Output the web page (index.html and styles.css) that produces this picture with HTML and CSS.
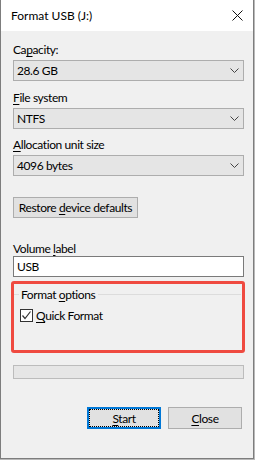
FILE: index.html
```html
<!DOCTYPE html>
<html lang="en">
<head>
  <meta charset="UTF-8" />
  <title>Format USB (J:)</title>
  <link rel="stylesheet" href="styles.css">
</head>
<body>

  <div class="window">
    <div class="titlebar">
      <span class="title">Format USB (J:)</span>
      <svg class="close" width="11" height="11" viewBox="0 0 11 11">
        <path d="M0.5 0.5 L10.5 10.5 M10.5 0.5 L0.5 10.5" stroke="#111" stroke-width="1" fill="none"/>
      </svg>
    </div>

    <div class="content">
      <div class="field">
        <div class="label">Ca<u>p</u>acity:</div>
        <div class="combo">
          <span>28.6 GB</span>
          <svg class="chev" width="9" height="5" viewBox="0 0 9 5"><polyline points="0.5,0.5 4.5,4.5 8.5,0.5" stroke="#444" fill="none"/></svg>
        </div>
      </div>
      <div class="field">
        <div class="label"><u>F</u>ile system</div>
        <div class="combo">
          <span>NTFS</span>
          <svg class="chev" width="9" height="5" viewBox="0 0 9 5"><polyline points="0.5,0.5 4.5,4.5 8.5,0.5" stroke="#444" fill="none"/></svg>
        </div>
      </div>
      <div class="field field-alloc">
        <div class="label"><u>A</u>llocation unit size</div>
        <div class="combo">
          <span>4096 bytes</span>
          <svg class="chev" width="9" height="5" viewBox="0 0 9 5"><polyline points="0.5,0.5 4.5,4.5 8.5,0.5" stroke="#444" fill="none"/></svg>
        </div>
      </div>

      <button class="btn restore-btn"><span>Restore <u>d</u>evice defaults</span></button>

      <div class="field volume">
        <div class="label">Volume <u>l</u>abel</div>
        <div class="textbox">USB</div>
      </div>

      <div class="highlight">
        <div class="group-title"><span>Format <u>o</u>ptions</span></div>
        <div class="check-row">
          <span class="checkbox">
            <svg width="11" height="11" viewBox="0 0 11 11"><polyline points="1.5,5.5 4,8.5 9.5,1.5" stroke="#333" stroke-width="1.2" fill="none"/></svg>
          </span>
          <span><u>Q</u>uick Format</span>
        </div>
      </div>

      <div class="progress"></div>

      <div class="actions">
        <button class="btn start-btn"><span class="focus"><span><u>S</u>tart</span></span></button>
        <button class="btn"><span><u>C</u>lose</span></button>
      </div>
    </div>
  </div>

</body>
</html>
```

FILE: styles.css
```css
body {
  margin: 0;
  background-color: #b9b9b9;
  font-family: Lato, "Liberation Sans", sans-serif;
  font-size: 12px;
  line-height: 15px;
  color: #000;
}

.window {
  width: 254px;
  height: 459px;
  box-sizing: border-box;
  border-left: 1px solid #7d7d7d;
  border-right: 1px solid #7d7d7d;
  border-bottom: 1px solid #7d7d7d;
  background-color: #f0f0f0;
}

.titlebar {
  height: 31px;
  background-color: #fff;
  display: flex;
  align-items: center;
  justify-content: space-between;
  padding: 0 10px;
}

.close {
  display: block;
}

.content {
  padding: 11px 9px 0 12px;
  letter-spacing: -0.4px;
}

u {
  text-decoration-thickness: 1px;
  text-underline-offset: 2px;
}

.field + .field {
  margin-top: 9px;
}

.field-alloc {
  margin-top: 8px !important;
}

.label {
  margin-bottom: 3px;
}

.combo {
  height: 21px;
  box-sizing: border-box;
  border: 1px solid #adadad;
  background-color: #e5e5e5;
  display: flex;
  align-items: center;
  justify-content: space-between;
  padding: 0 4px 0 3px;
}

.chev {
  display: block;
}

.btn {
  font: inherit;
  letter-spacing: inherit;
  color: #000;
  height: 21px;
  box-sizing: border-box;
  border: 1px solid #adadad;
  background-color: #e1e1e1;
  padding: 0;
  display: flex;
  align-items: center;
  justify-content: center;
}

.restore-btn {
  margin-top: 21px;
  width: 125px;
}

.field.volume {
  margin-top: 23px;
}

.volume .label {
  margin-bottom: 0;
}

.textbox {
  height: 21px;
  box-sizing: border-box;
  border: 1px solid #7a7a7a;
  background-color: #fff;
  padding: 0 3px;
  line-height: 19px;
}

.highlight {
  margin: 4px -1px 0 -2px;
  height: 72px;
  box-sizing: border-box;
  border: 3px solid #ef4a40;
  border-radius: 3px;
  padding-top: 3px;
}

.group-title {
  display: flex;
  align-items: center;
}

.group-title::before,
.group-title::after {
  content: "";
  height: 1px;
  background-color: #dcdcdc;
}

.group-title::before {
  width: 5px;
  margin-right: 2px;
}

.group-title::after {
  flex: 1;
  margin: 0 1px 0 3px;
}

.check-row {
  margin-top: 6px;
  padding-left: 6px;
  display: flex;
  align-items: center;
  gap: 3px;
}

.checkbox {
  width: 13px;
  height: 13px;
  box-sizing: border-box;
  border: 1px solid #333;
  background-color: #fff;
  display: flex;
  align-items: center;
  justify-content: center;
}

.checkbox svg {
  display: block;
}

.progress {
  margin-top: 12px;
  height: 14px;
  box-sizing: border-box;
  border: 1px solid #bcbcbc;
  background-color: #e6e6e6;
}

.actions {
  margin-top: 28px;
  display: flex;
  justify-content: flex-end;
  gap: 7px;
  padding-right: 2px;
}

.actions .btn {
  width: 74px;
  height: 22px;
}

.start-btn {
  border: 2px solid #0078d7 !important;
  padding: 0;
}

.focus {
  flex: 1;
  align-self: stretch;
  border: 1px dotted #000;
  display: flex;
  align-items: center;
  justify-content: center;
}
```
